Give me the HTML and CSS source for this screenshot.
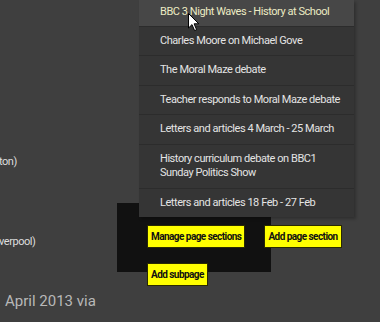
FILE: index.html
```html
<!DOCTYPE html>
<html lang="en">
<head>
  <meta charset="UTF-8">
  <title>History at School</title>
  <meta name="viewport" content="width=device-width, initial-scale=1">
  <link rel="stylesheet" href="styles.css">
</head>
<body>
  <div class="content">
    <p class="line first">ton)</p>
    <p class="line second">verpool)</p>
    <p class="posted">April 2013 via</p>
  </div>

  <div class="admin-panel"></div>

  <div class="admin-tools">
    <div class="tool-row">
      <a class="tool-btn" href="#">Manage page sections</a>
      <a class="tool-btn" href="#">Add page section</a>
    </div>
    <div class="tool-row">
      <a class="tool-btn" href="#">Add subpage</a>
    </div>
  </div>

  <ul class="dropdown">
    <li class="hover"><a href="#">BBC 3 Night Waves - History at School</a></li>
    <li><a href="#">Charles Moore on Michael Gove</a></li>
    <li><a href="#">The Moral Maze debate</a></li>
    <li><a href="#">Teacher responds to Moral Maze debate</a></li>
    <li><a href="#">Letters and articles 4 March - 25 March</a></li>
    <li><a href="#">History curriculum debate on BBC1<br>Sunday Politics Show</a></li>
    <li><a href="#">Letters and articles 18 Feb - 27 Feb</a></li>
  </ul>

  <svg class="cursor" width="12" height="19" viewBox="0 0 12 19">
    <path d="M0.5 0.5 L0.5 15 L4 11.6 L6.6 17.6 L8.6 16.7 L6.1 10.8 L10.8 10.8 Z" fill="#fff" stroke="#000" stroke-width="1"/>
  </svg>
</body>
</html>
```

FILE: styles.css
```css
body {
  margin: 0;
  background-color: #3f3f3f;
  color: #ddd;
  font-family: Roboto, "Liberation Sans", sans-serif;
  font-size: 11px;
  letter-spacing: -0.45px;
  height: 322px;
  overflow: hidden;
}

.content {
  padding-top: 154px;
}

.line {
  margin: 0;
  line-height: 15px;
  margin-left: -1px;
}

.line.second {
  margin-top: 65px;
}

.posted {
  margin: 42px 0 0 5px;
  font-size: 15px;
  line-height: 20px;
  letter-spacing: 0;
  color: #b8b8b8;
}

.admin-panel {
  position: absolute;
  left: 117px;
  top: 203px;
  width: 154px;
  height: 69px;
  background: #111;
}

.admin-tools {
  position: absolute;
  left: 147px;
  top: 225px;
  display: flex;
  flex-direction: column;
  align-items: flex-start;
  gap: 15px;
}

.tool-row {
  display: flex;
  gap: 19px;
}

.tool-btn {
  display: block;
  background: #ffff00;
  border: 1px solid #2a2a00;
  color: #111;
  font-weight: bold;
  font-size: 10px;
  letter-spacing: -0.55px;
  line-height: 21px;
  padding: 0 3px;
  text-decoration: none;
  white-space: nowrap;
}

.dropdown {
  position: absolute;
  left: 139px;
  top: 0;
  width: 215px;
  margin: 0;
  padding: 0;
  list-style: none;
  background: #353535;
  box-shadow: 2px 2px 3px rgba(0, 0, 0, 0.25);
}

.dropdown li {
  border-top: 1px solid #2c2c2c;
}

.dropdown li a {
  display: block;
  padding: 7px 10px 7px 21px;
  line-height: 14.5px;
  color: #e4e4e4;
  text-decoration: none;
  white-space: nowrap;
}

.dropdown li.hover {
  border-top: 0;
  background: #474747;
}

.dropdown li.hover a {
  padding-top: 5px;
  padding-bottom: 6px;
  color: #ecebc4;
}

.cursor {
  position: absolute;
  left: 188px;
  top: 13px;
}
```
